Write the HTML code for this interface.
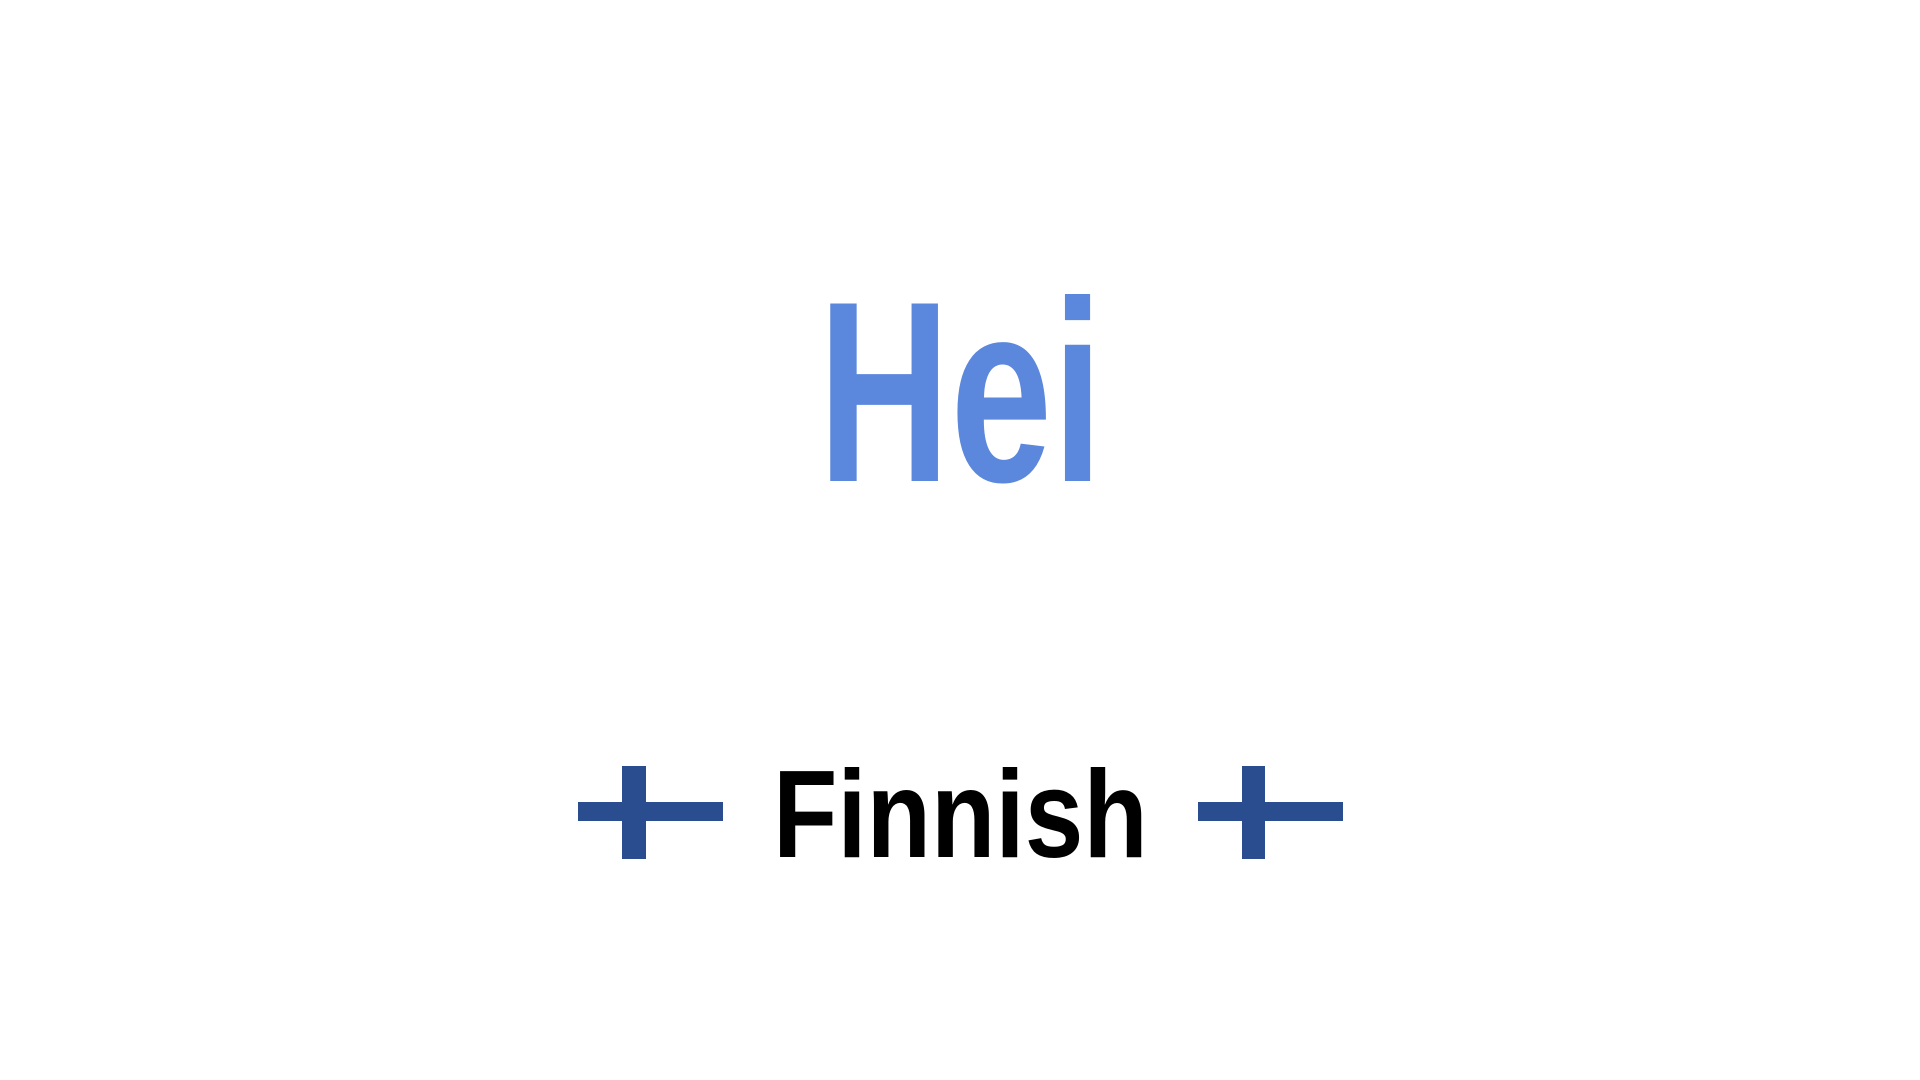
<!DOCTYPE html>
<html><head><style>
html,body{margin:0;width:1920px;height:1080px;background:#fff;overflow:hidden;position:relative}
.t{position:absolute;font-family:"Liberation Sans",sans-serif;font-weight:bold;white-space:nowrap;transform-origin:0 0;line-height:1}
.b{position:absolute;background:#2a4d8f}
</style></head><body>
<div class="t" style="left:818px;top:263px;font-size:258px;color:#5b87dc;transform:scaleX(0.71)">Hei</div>
<div class="t" style="left:773px;top:753px;font-size:124px;color:#000;transform:scaleX(0.85)">Finnish</div>
<div class="b" style="left:578px;top:802px;width:145px;height:19px"></div>
<div class="b" style="left:622px;top:766px;width:24px;height:93px"></div>
<div class="b" style="left:1198px;top:802px;width:145px;height:19px"></div>
<div class="b" style="left:1242px;top:766px;width:23px;height:93px"></div>
</body></html>
